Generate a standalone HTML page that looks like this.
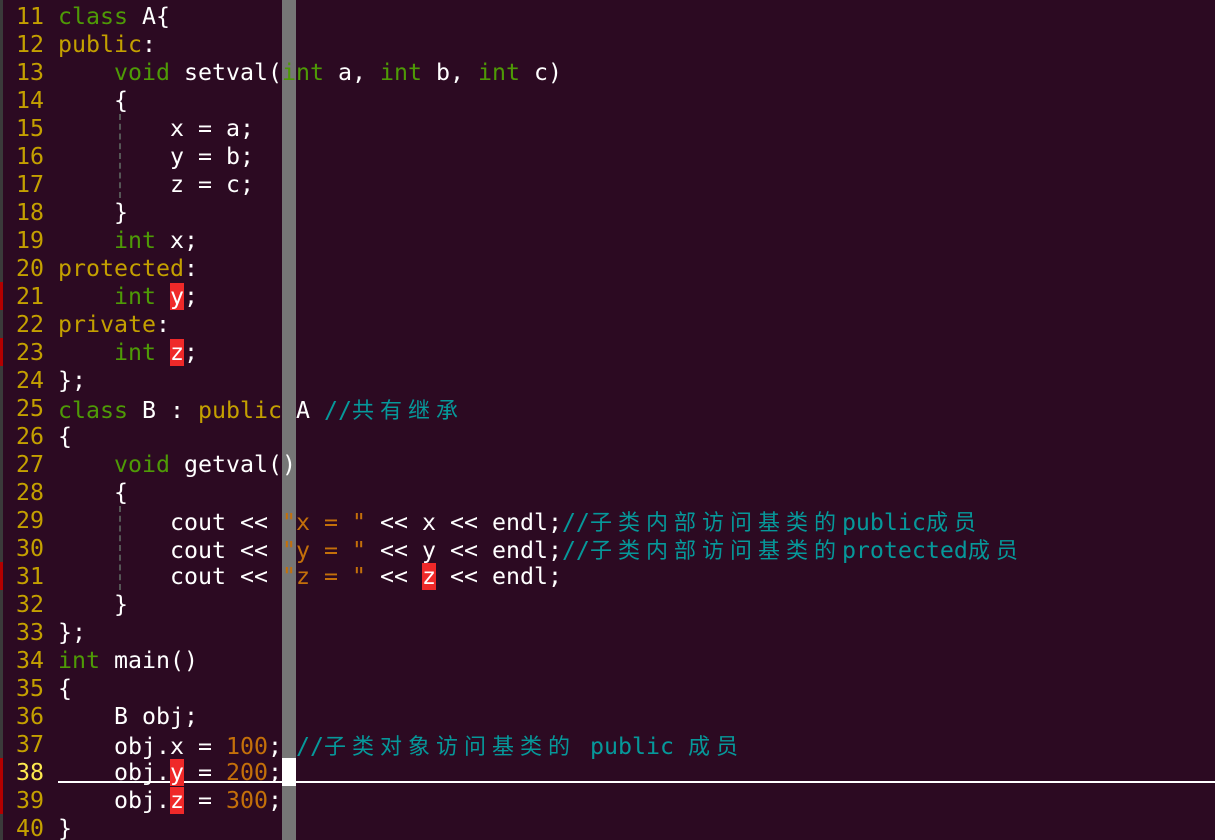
<!DOCTYPE html>
<html><head><meta charset="utf-8"><style>
html,body{margin:0;padding:0;background:#2c0a22;width:1215px;height:840px;overflow:hidden;}
body{position:relative;font-family:"DejaVu Sans Mono","Liberation Mono",monospace;font-size:23.25px;color:#ffffff;}
.l{position:absolute;left:58px;height:28px;line-height:30px;white-space:pre;}
.n{position:absolute;left:2px;width:42px;text-align:right;height:28px;line-height:30px;color:#c4a000;}
.k{color:#4e9a06}.y{color:#c4a000}.s{color:#c4700a}.c{color:#06989a}
.e{background:#ef2929;color:#fff}
.j{display:inline-block;width:28px;font-family:"Noto Sans CJK SC",sans-serif;font-size:22px;text-align:left;}
.bar{position:absolute;left:282px;top:0;width:14px;height:840px;background:#767676;}
.mk{position:absolute;left:0;width:3px;height:28px;background:#b30000;}
.gd{position:absolute;left:119px;width:2px;border-left:2px dashed #555;}
</style></head><body>
<div style="position:absolute;left:0;top:0;width:3px;height:840px;background:#3a3a3a"></div>
<div class="bar"></div>
<div class="mk" style="top:282px"></div>
<div class="mk" style="top:338px"></div>
<div class="mk" style="top:562px"></div>
<div class="mk" style="top:758px;height:56px"></div>
<div class="gd" style="top:114px;height:84px"></div>
<div class="gd" style="top:506px;height:84px"></div>
<div style="position:absolute;left:282px;top:758px;width:14px;height:28px;background:#fff"></div>
<div style="position:absolute;left:58px;top:781px;width:1157px;height:2px;background:#fff"></div>

<div class="n" style="top:2px">11</div><div class="l" style="top:2px"><span class="k">class</span> A{</div>
<div class="n" style="top:30px">12</div><div class="l" style="top:30px"><span class="y">public</span>:</div>
<div class="n" style="top:58px">13</div><div class="l" style="top:58px">    <span class="k">void</span> setval(<span class="k">int</span> a, <span class="k">int</span> b, <span class="k">int</span> c)</div>
<div class="n" style="top:86px">14</div><div class="l" style="top:86px">    {</div>
<div class="n" style="top:114px">15</div><div class="l" style="top:114px">        x = a;</div>
<div class="n" style="top:142px">16</div><div class="l" style="top:142px">        y = b;</div>
<div class="n" style="top:170px">17</div><div class="l" style="top:170px">        z = c;</div>
<div class="n" style="top:198px">18</div><div class="l" style="top:198px">    }</div>
<div class="n" style="top:226px">19</div><div class="l" style="top:226px">    <span class="k">int</span> x;</div>
<div class="n" style="top:254px">20</div><div class="l" style="top:254px"><span class="y">protected</span>:</div>
<div class="n" style="top:282px">21</div><div class="l" style="top:282px">    <span class="k">int</span> <span class="e">y</span>;</div>
<div class="n" style="top:310px">22</div><div class="l" style="top:310px"><span class="y">private</span>:</div>
<div class="n" style="top:338px">23</div><div class="l" style="top:338px">    <span class="k">int</span> <span class="e">z</span>;</div>
<div class="n" style="top:366px">24</div><div class="l" style="top:366px">};</div>
<div class="n" style="top:394px">25</div><div class="l" style="top:394px"><span class="k">class</span> B : <span class="y">public</span> A <span class="c">//<span class="j">共</span><span class="j">有</span><span class="j">继</span><span class="j">承</span></span></div>
<div class="n" style="top:422px">26</div><div class="l" style="top:422px">{</div>
<div class="n" style="top:450px">27</div><div class="l" style="top:450px">    <span class="k">void</span> getval()</div>
<div class="n" style="top:478px">28</div><div class="l" style="top:478px">    {</div>
<div class="n" style="top:506px">29</div><div class="l" style="top:506px">        cout &lt;&lt; <span class="s">"x = "</span> &lt;&lt; x &lt;&lt; endl;<span class="c">//<span class="j">子</span><span class="j">类</span><span class="j">内</span><span class="j">部</span><span class="j">访</span><span class="j">问</span><span class="j">基</span><span class="j">类</span><span class="j">的</span>public<span class="j">成</span><span class="j">员</span></span></div>
<div class="n" style="top:534px">30</div><div class="l" style="top:534px">        cout &lt;&lt; <span class="s">"y = "</span> &lt;&lt; y &lt;&lt; endl;<span class="c">//<span class="j">子</span><span class="j">类</span><span class="j">内</span><span class="j">部</span><span class="j">访</span><span class="j">问</span><span class="j">基</span><span class="j">类</span><span class="j">的</span>protected<span class="j">成</span><span class="j">员</span></span></div>
<div class="n" style="top:562px">31</div><div class="l" style="top:562px">        cout &lt;&lt; <span class="s">"z = "</span> &lt;&lt; <span class="e">z</span> &lt;&lt; endl;</div>
<div class="n" style="top:590px">32</div><div class="l" style="top:590px">    }</div>
<div class="n" style="top:618px">33</div><div class="l" style="top:618px">};</div>
<div class="n" style="top:646px">34</div><div class="l" style="top:646px"><span class="k">int</span> main()</div>
<div class="n" style="top:674px">35</div><div class="l" style="top:674px">{</div>
<div class="n" style="top:702px">36</div><div class="l" style="top:702px">    B obj;</div>
<div class="n" style="top:730px">37</div><div class="l" style="top:730px">    obj.x = <span class="s">100</span>; <span class="c">//<span class="j">子</span><span class="j">类</span><span class="j">对</span><span class="j">象</span><span class="j">访</span><span class="j">问</span><span class="j">基</span><span class="j">类</span><span class="j">的</span> public <span class="j">成</span><span class="j">员</span></span></div>
<div class="n" style="top:758px;color:#fce94f">38</div><div class="l" style="top:758px">    obj.<span class="e">y</span> = <span class="s">200</span>;</div>
<div class="n" style="top:786px">39</div><div class="l" style="top:786px">    obj.<span class="e">z</span> = <span class="s">300</span>;</div>
<div class="n" style="top:814px">40</div><div class="l" style="top:814px">}</div>
</body></html>
